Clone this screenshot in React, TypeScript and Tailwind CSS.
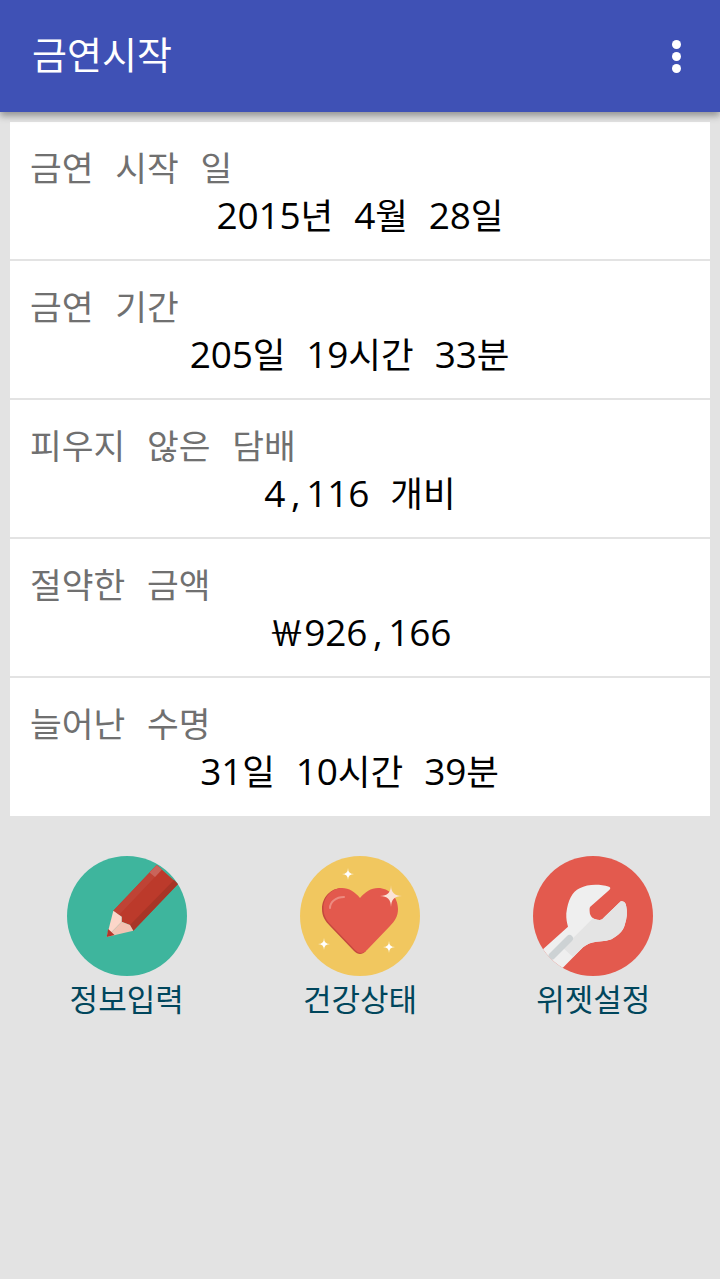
import React from "react";

const rows = [
  { label: "금연 시작 일", value: "2015년 4월 28일" },
  { label: "금연 기간", value: "205일 19시간 33분 " },
  { label: "피우지 않은 담배", value: "4,116 개비" },
  { label: "절약한 금액", value: "￦926,166" },
  { label: "늘어난 수명", value: "31일 10시간 39분 " },
];

// digits, commas and spaces sit in fixed cells in the screenshot, hangul does not
function Value({ text }: { text: string }) {
  return (
    <>
      {Array.from(text).map((ch, i) =>
        /[0-9, ]/.test(ch) ? (
          <span key={i} className="inline-block w-[21px] text-center whitespace-pre text-[37px] leading-none font-['Open_Sans',sans-serif]">
            {ch}
          </span>
        ) : (
          <span key={i}>{ch}</span>
        )
      )}
    </>
  );
}

function star(cx: number, cy: number, r: number) {
  return `M${cx} ${cy - r} Q${cx} ${cy} ${cx + r} ${cy} Q${cx} ${cy} ${cx} ${cy + r} Q${cx} ${cy} ${cx - r} ${cy} Q${cx} ${cy} ${cx} ${cy - r} Z`;
}

function PencilIcon() {
  return (
    <svg viewBox="0 0 120 120" className="w-[120px] h-[120px]">
      <defs>
        <clipPath id="pencil-clip"><circle cx="60" cy="60" r="60" /></clipPath>
      </defs>
      <circle cx="60" cy="60" r="60" fill="#3eb59d" />
      <g clipPath="url(#pencil-clip)">
        <path d="M46.3 54.7 L89.7 9 L111 28 L66.3 74.7 L63 69 L54.7 65.7 L54.7 60.7 Z" fill="#bc3a2b" />
        <path d="M46.3 54.7 L89.7 9 L95 13.5 L52 59 Z" fill="#bf4335" />
        <path d="M89.7 9 L95 13.5 L88 21 L82.5 16.5 Z" fill="#c9645a" />
        <path d="M66.3 74.7 L111 28 L107 24 L63 69 Z" fill="#a83527" />
        <path d="M39.7 81 L46.3 54.7 L54.7 60.7 L54.7 65.7 Z" fill="#fcd6c9" />
        <path d="M39.7 81 L54.7 65.7 L63 69 L66.3 74.7 Z" fill="#f2c3b3" />
        <path d="M39.7 81 L41.2 73 L47.5 79 Z" fill="#b5352a" />
      </g>
    </svg>
  );
}

function HeartIcon() {
  return (
    <svg viewBox="0 0 120 120" className="w-[120px] h-[120px]">
      <circle cx="60" cy="60" r="60" fill="#f1c75f" />
      <path d="M60 98 C58 98 56 97 54 95 L30 70 C25 65 22 60 22 53 C22 41 31 32 42 32 L60 60 L66 95 C64 97 62 98 60 98 Z" fill="#c4483e" />
      <path d="M61 97 C59 97 57 96 55 94 L31.5 69.5 C26 64 23.5 59 23.5 52 C23.5 41 32 32 42 32 C49 32 55 36 60 42 C65 36 71 32 78 32 C89 32 98 41 98 53 C98 60 95 65 90 70 L67 94 C65 96 63 97 61 97 Z" fill="#e3594d" />
      <path d="M30 52 C30 46 36 41 44 41" fill="none" stroke="#ec8b80" strokeWidth="2" strokeLinecap="round" />
      <path d={star(91, 40, 11)} fill="#fbe3d8" />
      <path d={star(48, 18, 6)} fill="#fff" />
      <path d={star(24, 88, 6)} fill="#fff" />
      <path d={star(89, 91, 6)} fill="#fff" />
    </svg>
  );
}

function WrenchIcon() {
  return (
    <svg viewBox="0 0 120 120" className="w-[120px] h-[120px]">
      <defs>
        <clipPath id="wrench-clip"><circle cx="60" cy="60" r="60" /></clipPath>
      </defs>
      <circle cx="60" cy="60" r="60" fill="#e35a4e" />
      <g clipPath="url(#wrench-clip)">
        <path
          d="M76 30.7 C66 28 55 28 46.7 32.3 C39 36 35 44 33.3 57.3 C33 63 34 67 35 70.7 L8 95 L26.7 115 L50 91.3 C54 88 58 86.5 63.3 85.7 C71 85 76 85 80 82.3 C88 78 91 72 91.7 69 C94 62 94.5 56 93.3 50.7 C93 47 91.5 45.7 89 45.2 C88 45.2 87.5 45.4 87.3 45.7 L71.7 60.7 C70 62.7 68.5 64 66.7 64 C63 64 61 63 60 62.3 C57.5 60 56.7 58 56.7 55.7 C56.5 53 56.5 51.5 57.3 50.7 L76 34.3 C77.5 33 78 31.5 76 30.7 Z"
          fill="#efefef"
        />
        <path
          d="M60 62.3 C61 63 63 64 66.7 64 C68.5 64 70 62.7 71.7 60.7 L87.3 45.7 C87.5 45.4 88 45.2 89 45.2 C91.5 45.7 93 47 93.3 50.7 C94.5 56 94 62 91.7 69 C91 72 88 78 80 82.3 C76 85 71 85 63.3 85.7 C58 86.5 54 88 50 91.3 L40 101 L30 92 Z"
          fill="#e4e4e4"
        />
        <path d="M36.5 82.5 L19 100" fill="none" stroke="#cdd2d4" strokeWidth="7" strokeLinecap="round" />
      </g>
    </svg>
  );
}

const actions = [
  { label: "정보입력", icon: <PencilIcon /> },
  { label: "건강상태", icon: <HeartIcon /> },
  { label: "위젯설정", icon: <WrenchIcon /> },
];

export default function App() {
  return (
    <div className="w-[720px] h-[1279px] bg-[#e3e3e3] overflow-hidden font-['Noto_Sans_CJK_KR','Noto_Sans',sans-serif]">
      <header className="relative z-10 h-[112px] bg-[#3f51b5] flex items-center justify-between pl-[32px] pr-[39px] shadow-[0_4px_7px_rgba(0,0,0,0.35)]">
        <h1 className="text-[38px] leading-none text-white font-normal pb-[6px]">금연시작</h1>
        <div className="flex flex-col gap-[3px]">
          <span className="w-[9px] h-[9px] rounded-full bg-white"></span>
          <span className="w-[9px] h-[9px] rounded-full bg-white"></span>
          <span className="w-[9px] h-[9px] rounded-full bg-white"></span>
        </div>
      </header>

      <main className="mx-[10px] mt-[10px] bg-white">
        {rows.map((row, i) => (
          <div key={row.label} className={i < rows.length - 1 ? "h-[139px] pt-[21px] border-b-2 border-[#e3e3e3]" : "h-[138px] pt-[21px]"}>
            <div className="pl-[20px] text-[34.5px] leading-[46px] text-[#707070] [word-spacing:14px]">{row.label}</div>
            <div className="text-[35.5px] leading-[48px] text-black text-center mt-[1px]">
              <Value text={row.value} />
            </div>
          </div>
        ))}
      </main>

      <div className="mt-[40px] grid grid-cols-3 px-[10px]">
        {actions.map((a) => (
          <div key={a.label} className="flex flex-col items-center">
            {a.icon}
            <span className="text-[31px] leading-[44px] text-[#00465c]">{a.label}</span>
          </div>
        ))}
      </div>
    </div>
  );
}
